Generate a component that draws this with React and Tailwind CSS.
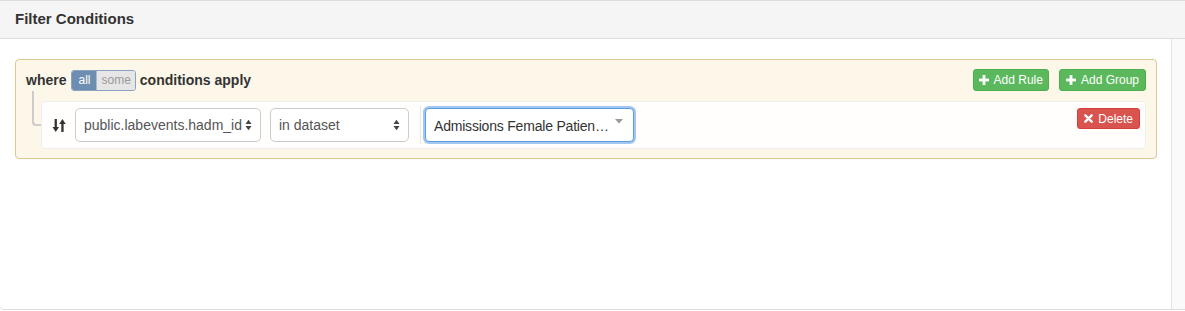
import React from "react";

const font = { fontFamily: '"Liberation Sans", Arial, Helvetica, sans-serif' };

function Plus() {
  return (
    <svg width="10" height="10" viewBox="0 0 10 10" className="shrink-0">
      <rect x="3.6" y="0" width="2.8" height="10" fill="white" />
      <rect x="0" y="3.6" width="10" height="2.8" fill="white" />
    </svg>
  );
}

function Times() {
  return (
    <svg width="9" height="9" viewBox="0 0 10 10" className="shrink-0">
      <path d="M1.5 1.5 L8.5 8.5 M8.5 1.5 L1.5 8.5" stroke="white" strokeWidth="2.6" strokeLinecap="round" />
    </svg>
  );
}

function SortIcon() {
  return (
    <svg width="14" height="15" viewBox="0 0 14 15">
      <rect x="2.6" y="1" width="2.3" height="9" fill="#333" />
      <path d="M0.5 9 L7 9 L3.75 14 Z" fill="#333" />
      <rect x="9.3" y="5" width="2.3" height="9" fill="#333" />
      <path d="M7.2 6 L13.7 6 L10.45 1 Z" fill="#333" />
    </svg>
  );
}

function UpDown() {
  return (
    <svg width="7" height="12" viewBox="0 0 7 12" className="shrink-0">
      <path d="M0.5 5 L6.5 5 L3.5 0.8 Z" fill="#444" />
      <path d="M0.5 7 L6.5 7 L3.5 11.2 Z" fill="#444" />
    </svg>
  );
}

export default function App() {
  return (
    <div className="w-[1185px] h-[311px] overflow-hidden bg-white" style={font}>
      <div className="h-[310px] flex flex-col border-t border-b border-[#dddddd] rounded-bl-[4px]">
        <div className="h-[38px] shrink-0 bg-[#f5f5f5] border-b border-[#dddddd] flex items-center pl-[15px] pb-[1px] text-[15px] font-bold text-[#333333]">
          Filter Conditions
        </div>
        <div className="flex-1 flex">
          <div className="flex-1 pt-[20px] pl-[15px] pr-[14px]">
            <div className="border border-[#dcc896] bg-[#fcf7e8] rounded-[4px] pt-[9px] pb-[9px] pl-[10px] pr-[10px]">
              <div className="flex items-center h-[22px]">
                <span className="text-[14px] font-bold text-[#333333]">where</span>
                <div className="flex ml-[5px] h-[21px] rounded-[3px] border border-[#8aa3bf] overflow-hidden text-[12px]">
                  <div className="bg-[#6d8db1] text-white px-[6px] flex items-center">all</div>
                  <div className="bg-[#e6e6e6] text-[#9a9a9a] px-[4px] flex items-center border-l border-[#a9bacd]">some</div>
                </div>
                <span className="ml-[4px] text-[14px] font-bold text-[#333333]">conditions apply</span>
                <div className="ml-auto flex gap-[10px]">
                  <div className="h-[22px] flex items-center gap-[5px] px-[5px] rounded-[3px] bg-[#5cb85c] border border-[#4cae4c] text-white text-[12px]">
                    <Plus />
                    <span>Add Rule</span>
                  </div>
                  <div className="h-[22px] flex items-center gap-[5px] px-[6px] rounded-[3px] bg-[#5cb85c] border border-[#4cae4c] text-white text-[12px]">
                    <Plus />
                    <span>Add Group</span>
                  </div>
                </div>
              </div>
              <div className="pl-[15px] mt-[10px]">
                <div className="relative">
                  <div className="absolute left-[-9px] top-[-10px] w-[9px] h-[35px] border-l-2 border-b-2 border-[#cccccc] rounded-bl-[4px]" />
                  <div className="h-[48px] flex items-center border border-[#eeeeee] bg-[#fffefc] rounded-[4px] pl-[10px] pr-[5px]">
                    <div className="w-[14px] mr-[9px] flex items-center mt-[1px]">
                      <SortIcon />
                    </div>
                    <div className="w-[186px] h-[34px] border border-[#cccccc] rounded-[5px] bg-white flex items-center pl-[8px] pr-[8px] text-[14px] text-[#555555]">
                      <span className="flex-1 whitespace-nowrap">public.labevents.hadm_id</span>
                      <UpDown />
                    </div>
                    <div className="ml-[9px] w-[139px] h-[34px] border border-[#cccccc] rounded-[5px] bg-white flex items-center pl-[8px] pr-[8px] text-[14px] text-[#555555]">
                      <span className="flex-1">in dataset</span>
                      <UpDown />
                    </div>
                    <div className="ml-[11px] h-[38px] border-l border-[#e8e8e8] pl-[4px] flex items-center">
                      <div className="w-[209px] h-[34px] border border-[#5a9bdc] rounded-[4px] bg-white shadow-[0_0_0_2px_rgba(132,180,238,0.75)] flex items-start pl-[8px] pr-[10px] text-[14px] text-[#333333]">
                        <span className="flex-1 whitespace-nowrap tracking-[-0.2px] mt-[7px]">Admissions Female Patien…</span>
                        <svg width="8" height="5" viewBox="0 0 8 5" className="mt-[10px] ml-[2px] shrink-0">
                          <path d="M0 0 L8 0 L4 4.5 Z" fill="#999999" />
                        </svg>
                      </div>
                    </div>
                    <div className="ml-auto self-start mt-[6px] h-[21px] flex items-center gap-[5px] px-[6px] rounded-[3px] bg-[#d9534f] border border-[#d43f3a] text-white text-[12px]">
                      <Times />
                      <span>Delete</span>
                    </div>
                  </div>
                </div>
              </div>
            </div>
          </div>
          <div className="w-[14px] border-l border-[#e3e3e3] bg-[#fafafa]" />
        </div>
      </div>
    </div>
  );
}
